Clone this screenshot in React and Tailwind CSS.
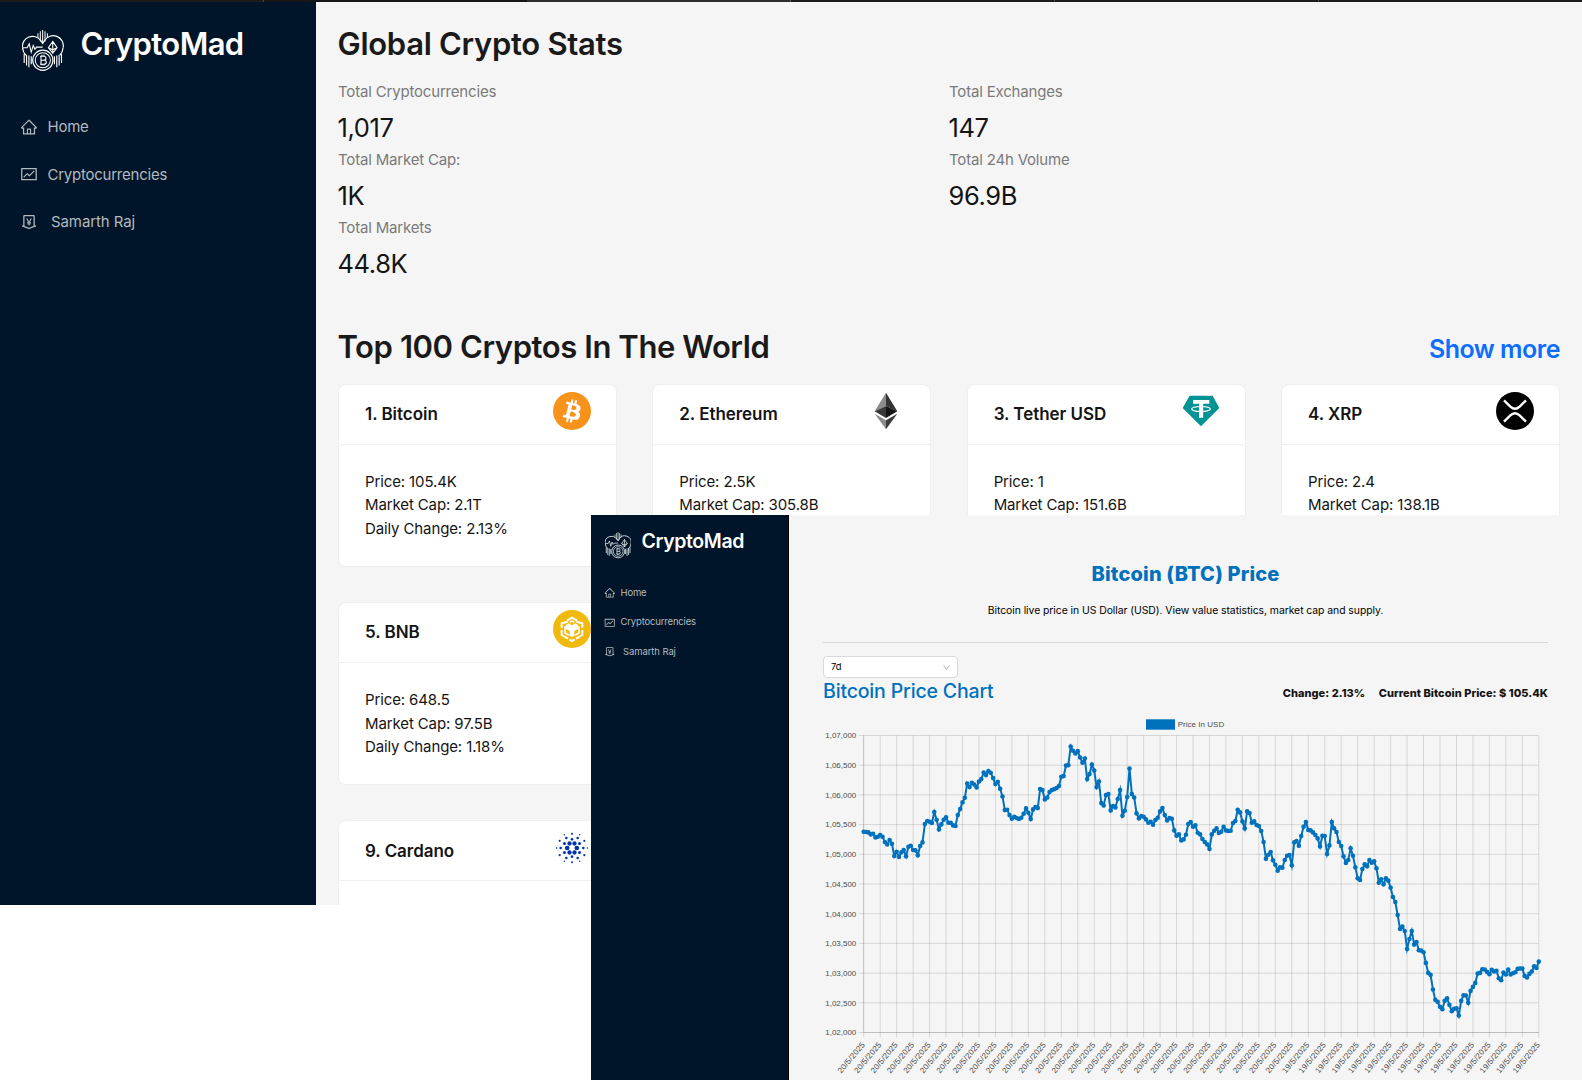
import { AiOutlineHome, AiOutlineFund, AiOutlineMoneyCollect, AiOutlineDown } from "react-icons/ai";

function Logo({ className }) {
  return (
    <svg viewBox="0 0 124 122" className={className} fill="none" stroke="#fff" strokeWidth="3.6">
      <path d="M1 52 A30 30 0 0 1 55 31 L61 40 L67 31 A30 30 0 0 1 122 52" />
      <path d="M1 52 Q2 66 11 75 M122 52 Q121 66 112 75" />
      <path d="M2 53 H15 L21 41 L27 66 L33 46 L38 57 L43 51 H61" strokeWidth="3.2" />
      <path d="M91 34 L104 53 L91 69 L78 53 Z M91 34 V69 M78 53 L91 59 L104 53" strokeWidth="3.2" />
      <path d="M61 0 V40 M54 4 V34 M68 4 V34 M47 10 V24 M75 10 V24" strokeWidth="3" />
      <path d="M6 71 V98 M13 74 V106 M20 76 V111 M27 78 V102 M117 71 V98 M110 74 V106 M103 76 V111 M96 78 V102" strokeWidth="3.4" />
      <circle cx="61.5" cy="90" r="30" fill="#001529" />
      <circle cx="61.5" cy="90" r="22.5" strokeWidth="3" />
      <path d="M53 78 H64 Q71 78 71 84 Q71 90 64 90 H56 M64 90 Q72 90 72 96 Q72 102 64 102 H53 M56 78 V102 M59 74 V78 M65 74 V78 M59 102 V106 M65 102 V106" strokeWidth="3.2" />
    </svg>
  );
}

function Bitcoin() {
  return (
    <svg viewBox="0 0 32 32" className="size-[38px]">
      <circle cx="16" cy="16" r="16" fill="#f7931a" />
      <path
        fill="#fff"
        d="M23.189 14.02c.314-2.096-1.283-3.223-3.465-3.975l.708-2.84-1.728-.43-.69 2.765c-.454-.114-.92-.22-1.385-.326l.695-2.783L15.596 6l-.708 2.839c-.376-.086-.746-.17-1.104-.26l.002-.009-2.384-.595-.46 1.846s1.283.294 1.256.312c.7.175.826.638.805 1.006l-.806 3.235c.048.012.11.03.18.057l-.183-.045-1.13 4.532c-.086.212-.303.531-.793.41.018.025-1.256-.313-1.256-.313l-.858 1.978 2.25.561c.418.105.828.215 1.231.318l-.715 2.872 1.727.43.708-2.84c.472.127.93.245 1.378.357l-.706 2.828 1.728.43.715-2.866c2.948.558 5.164.333 6.097-2.333.752-2.146-.037-3.385-1.588-4.192 1.13-.26 1.98-1.003 2.207-2.538zm-3.95 5.538c-.533 2.147-4.148.986-5.32.695l.95-3.805c1.172.293 4.929.872 4.37 3.11zm.535-5.569c-.487 1.953-3.495.96-4.47.717l.86-3.45c.975.243 4.118.696 3.61 2.733z"
      />
    </svg>
  );
}

function Ethereum() {
  return (
    <svg viewBox="-57 -57 114 114" className="size-[38px]">
      <path d="M0 -55 L-34 1 L0 -15 Z" fill="#8c8c8c" />
      <path d="M0 -55 L34 1 L0 -15 Z" fill="#343434" />
      <path d="M-34 1 L0 -15 V21 Z" fill="#393939" />
      <path d="M34 1 L0 -15 V21 Z" fill="#141414" />
      <path d="M-34 8 L0 28 V55 Z" fill="#8c8c8c" />
      <path d="M34 8 L0 28 V55 Z" fill="#3c3c3b" />
    </svg>
  );
}

function Tether() {
  return (
    <svg viewBox="-57 -57 114 114" className="size-[38px]">
      <path d="M-34 -46 H35 L55 -9 L0 46 L-55 -9 Z" fill="#009393" />
      <path d="M-24 -33 H25 V-22 H6.500 V20 H-6 V-22 H-24 Z" fill="#fff" />
      <ellipse cx="0" cy="-6" rx="28" ry="7.500" fill="none" stroke="#fff" strokeWidth="3.500" />
    </svg>
  );
}

function Xrp() {
  return (
    <svg viewBox="-57 -57 114 114" className="size-[38px]" fill="none" stroke="#fff" strokeWidth="7">
      <circle r="57" fill="#000" stroke="none" />
      <path d="M-33 -32 L-14 -13 Q0 0 14 -13 L33 -32" />
      <path d="M-33 32 L-14 13 Q0 0 14 13 L33 32" />
    </svg>
  );
}

function Bnb() {
  return (
    <svg viewBox="-57 -57 114 114" className="size-[38px]" fill="none" stroke="#fff" strokeWidth="6">
      <circle r="57" fill="#f0b90b" stroke="none" />
      <path d="M-15 -25 L0 -34 L15 -25" />
      <path d="M-13 -22 L-31 -17 V-4 M13 -22 L31 -17 V-4" />
      <path d="M-31 3 V18 L-12 29 M31 3 V18 L12 29" />
      <path d="M-8 31 L0 36 L8 31" />
      <path d="M-21 -8 V12 L-9 19 M21 -8 V12 L9 19" strokeWidth="5" />
      <path d="M-18 -12 L-10 -17 L0 -11 L10 -17 L18 -12 V0 L7 6 V20 L0 24 L-7 20 V6 L-18 0 Z" fill="#fff" stroke="none" />
      <path d="M-7 -20 L0 -24 L7 -20" strokeWidth="4" />
    </svg>
  );
}

const ADA_DOTS = [
  [14.5, 0, 7], [-14.5, 0, 7], [7.500, 13.500, 6.500], [-7.500, 13.500, 6.500], [7.500, -13.500, 6.500], [-7.500, -13.500, 6.500],
  [0, 26, 4], [0, -26, 4], [22.500, 13.500, 4.500], [-22.500, 13.500, 4.500], [22.500, -13.500, 4.500], [-22.500, -13.500, 4.500],
  [34, 0, 3.800], [-34, 0, 3.800], [17, 30, 3.800], [-17, 30, 3.800], [17, -30, 3.800], [-17, -30, 3.800],
  [0, 43, 3], [0, -43, 3], [37, 21.500, 3.200], [-37, 21.500, 3.200], [37, -21.500, 3.200], [-37, -21.500, 3.200],
  [46, 0, 2.200], [-46, 0, 2.200], [23, 40, 2.200], [-23, 40, 2.200], [23, -40, 2.200], [-23, -40, 2.200],
];

function Cardano() {
  return (
    <svg viewBox="-57 -60 114 114" className="size-[38px]" fill="#0033ad">
      {ADA_DOTS.map(([x, y, r]) => (
        <circle key={`${x},${y}`} cx={x} cy={y} r={r} />
      ))}
    </svg>
  );
}

const STATS = [
  ["Total Cryptocurrencies", "1,017"],
  ["Total Exchanges", "147"],
  ["Total Market Cap:", "1K"],
  ["Total 24h Volume", "96.9B"],
  ["Total Markets", "44.8K"],
];

const COINS = [
  { name: "1. Bitcoin", price: "105.4K", cap: "2.1T", change: "2.13%", Icon: Bitcoin },
  { name: "2. Ethereum", price: "2.5K", cap: "305.8B", Icon: Ethereum },
  { name: "3. Tether USD", price: "1", cap: "151.6B", Icon: Tether },
  { name: "4. XRP", price: "2.4", cap: "138.1B", Icon: Xrp },
  { name: "5. BNB", price: "648.5", cap: "97.5B", change: "1.18%", Icon: Bnb },
  null,
  null,
  null,
  { name: "9. Cardano", Icon: Cardano },
];

function CoinCard({ name, price, cap, change, Icon }) {
  return (
    <article className="h-[183px] rounded-lg border border-[#efefef] bg-white">
      <header className="flex h-[60px] items-start justify-between border-b border-[#efefef] pt-[7px] pr-[25px] pl-[26px]">
        <h3 className="pt-[2.500px] text-[17px] leading-[40px] font-semibold tracking-[-0.04px]">{name}</h3>
        <Icon />
      </header>
      {price && (
        <div className="pt-[25px] pl-[26px] text-[15px] leading-[23.7px] tracking-[-0.12px]">
          <p>Price: {price}</p>
          <p>Market Cap: {cap}</p>
          {change && <p>Daily Change: {change}</p>}
        </div>
      )}
    </article>
  );
}

function Dashboard() {
  return (
    <div className="flex h-[903px]">
      <aside className="w-[316px] shrink-0 bg-[#001529]">
        <div className="flex items-start pt-[27px] pl-[22px]">
          <Logo className="mt-[1px] h-[41px] w-[42px]" />
          <span className="-mt-[1px] ml-[16.500px] text-[31px] leading-[32px] font-semibold tracking-[-0.6px] text-white">CryptoMad</span>
        </div>
        <nav className="mt-[33px] text-[15px] tracking-[-0.24px] text-[#b3b9bf]">
          <a className="flex h-[47.3px] items-center gap-[9.5px] pl-[20px]">
            <AiOutlineHome className="-mt-[1px] size-[18px]" />
            Home
          </a>
          <a className="flex h-[47.3px] items-center gap-[9.500px] pl-[20px]">
            <AiOutlineFund className="-mt-[1px] size-[18px]" />
            Cryptocurrencies
          </a>
          <a className="flex h-[47.3px] items-center gap-[13px] pl-[20px] tracking-[-0.1px]">
            <AiOutlineMoneyCollect className="-mt-[1px] size-[18px]" />
            Samarth Raj
          </a>
        </nav>
      </aside>
      <main className="min-w-0 flex-1 overflow-hidden bg-[#f5f5f5] pt-[26px] pr-[22px] pl-[22px]">
        <h1 className="-ml-[0.500px] text-[31px] leading-[32px] font-semibold tracking-[-0.3px] text-[#1a1a1a]">Global Crypto Stats</h1>
        <dl className="mt-[20.4px] grid grid-cols-2">
          {STATS.map(([label, value]) => (
            <div key={label} className="h-[67.8px]">
              <dt className="text-[15px] leading-6 tracking-[-0.18px] text-[#7a7a7a]">{label}</dt>
              <dd className="mt-1 -ml-[0.500px] text-[25.500px] leading-[39.8px] tracking-[-0.4px]">{value}</dd>
            </div>
          ))}
        </dl>
        <div className="mt-[43.600px] flex h-10 items-center justify-between">
          <h2 className="-ml-[0.500px] text-[31px] leading-10 font-semibold tracking-[-0.42px] text-[#1a1a1a]">Top 100 Cryptos In The World</h2>
          <a className="pt-[3px] text-[25px] leading-10 font-semibold tracking-[-0.5px] text-[#0d6efd]">Show more</a>
        </div>
        <div className="mt-[16.2px] grid grid-cols-4 gap-x-[35.300px] gap-y-[35.300px]">
          {COINS.map((coin, i) => (coin ? <CoinCard key={coin.name} {...coin} /> : <div key={i} />))}
        </div>
      </main>
    </div>
  );
}

/* Vertical positions of the series; 76 is 1,07,000 and 968 is 1,02,000. */
const SERIES = [
  365, 366, 367, 373, 371, 382, 380, 375, 380, 396, 403, 390, 401, 438, 425, 441, 427, 420, 439, 410, 407, 420, 421, 436, 408, 397, 342, 333,
  335, 339, 306, 329, 358, 343, 329, 322, 338, 338, 346, 348, 315, 297, 277, 263, 220, 231, 218, 223, 232, 214, 207, 187, 195, 183, 188, 204,
  222, 215, 236, 259, 300, 299, 315, 326, 320, 324, 327, 323, 311, 295, 308, 327, 298, 291, 294, 237, 240, 268, 262, 246, 240, 237, 234, 228,
  200, 198, 166, 165, 109, 122, 130, 123, 142, 158, 145, 207, 192, 163, 181, 231, 214, 279, 286, 255, 252, 301, 288, 292, 267, 240, 317, 302,
  261, 175, 252, 262, 310, 325, 318, 320, 328, 338, 335, 344, 330, 323, 304, 294, 315, 331, 324, 326, 361, 377, 373, 391, 388, 374, 342, 336,
  350, 346, 368, 373, 387, 396, 403, 417, 373, 362, 355, 369, 365, 350, 361, 363, 362, 339, 333, 299, 307, 334, 355, 304, 309, 338, 334, 345,
  348, 363, 396, 446, 434, 426, 451, 464, 482, 472, 473, 450, 437, 435, 466, 397, 393, 407, 378, 350, 336, 360, 361, 367, 375, 385, 409, 377,
  378, 432, 406, 336, 355, 366, 396, 408, 439, 459, 450, 415, 437, 472, 505, 510, 477, 463, 469, 450, 458, 454, 475, 518, 508, 523, 505, 512,
  533, 561, 576, 615, 657, 650, 663, 717, 687, 663, 704, 696, 721, 722, 727, 759, 789, 795, 839, 870, 876, 891, 898, 873, 865, 885, 904, 897,
  895, 917, 873, 856, 857, 879, 843, 831, 819, 791, 789, 778, 779, 786, 793, 780, 785, 783, 805, 811, 788, 794, 779, 794, 790, 787, 777, 776,
  776, 798, 803, 792, 785, 769, 774, 755,
];
const Y_LABELS = ["1,07,000", "1,06,500", "1,06,000", "1,05,500", "1,05,000", "1,04,500", "1,04,000", "1,03,500", "1,03,000", "1,02,500", "1,02,000"];

const LEFT = 40.7;
const RIGHT = 715.8;
const TOP = 21.5;
const BOTTOM = 318.5;
const STEP = (RIGHT - LEFT) / (SERIES.length - 1);
const points = SERIES.map((v, i) => [LEFT + i * STEP, TOP + ((v - 76) / 892) * (BOTTOM - TOP)]);

function PriceChart() {
  return (
    <svg width="759" height="366" viewBox="0 0 759 366" className="block" fontFamily='"Liberation Sans", Arial, sans-serif' fontSize="8" fill="#4d4d4d">
      <rect x="323" y="5.3" width="29" height="10.400" fill="#0071bd" />
      <text x="354.700" y="13.200" textLength="46.500">Price In USD</text>
      <g stroke="#000" strokeOpacity="0.12" fill="none">
        {Y_LABELS.map((label, i) => {
          const y = TOP + (i * (BOTTOM - TOP)) / 10;
          return <path key={label} d={`M${LEFT - 5} ${y}H${RIGHT}`} />;
        })}
        {Array.from({ length: 42 }, (_, i) => {
          const x = LEFT + i * 7 * STEP;
          return <path key={i} d={`M${x} ${TOP}V${BOTTOM + 5}`} />;
        })}
        <path d={`M${LEFT} ${TOP}V${BOTTOM}H${RIGHT}`} />
      </g>
      {Y_LABELS.map((label, i) => (
        <text key={label} x="33.300" y={TOP + (i * (BOTTOM - TOP)) / 10 + 2.8} textAnchor="end" textLength="31">
          {label}
        </text>
      ))}
      {Array.from({ length: 42 }, (_, i) => (
        <text key={i} textAnchor="end" transform={`translate(${LEFT + i * 7 * STEP + 1.6} 331) rotate(-50)`} textLength="37.500">
          {i < 27 ? "20/5/2025" : "19/5/2025"}
        </text>
      ))}
      <polyline points={points.map((p) => p.join(",")).join(" ")} fill="none" stroke="#0071bd" strokeWidth="2" strokeMiterlimit="10" />
      {points.map(([x, y], i) => (
        <circle key={i} cx={x} cy={y} r="2.300" fill="#0071bd" />
      ))}
    </svg>
  );
}

function DetailsWindow() {
  return (
    <section className="absolute top-[515px] left-[591px] flex h-[565px] w-[991px] overflow-hidden bg-[#f5f5f5]">
      <aside className="w-[198px] shrink-0 border-r border-black bg-[#001529]">
        <div className="flex items-start pt-[15px] pl-[13.5px]">
          <Logo className="mt-[2px] size-[26.5px]" />
          <span className="ml-[10.500px] pt-[0.500px] text-[19.500px] leading-[20px] font-semibold tracking-[-0.38px] text-white">CryptoMad</span>
        </div>
        <nav className="mt-[19.500px] text-[9.5px] tracking-[-0.17px] text-[#b3b9bf]">
          <a className="flex h-[29.600px] items-center gap-[5px] pl-[13px]">
            <AiOutlineHome className="size-[11.500px]" />
            Home
          </a>
          <a className="flex h-[29.600px] items-center gap-[5px] pl-[13px]">
            <AiOutlineFund className="size-[11.500px]" />
            Cryptocurrencies
          </a>
          <a className="flex h-[29.600px] items-center gap-[7.500px] pl-[13px] tracking-[-0.1px]">
            <AiOutlineMoneyCollect className="size-[11.500px]" />
            Samarth Raj
          </a>
        </nav>
      </aside>
      <main className="flex min-w-0 flex-1 flex-col pt-[44px] pl-[34px]">
        <header className="flex h-[84px] w-[725px] flex-col items-center border-b border-[#d9d9d9]">
          <h2 className="text-[20px] leading-[30px] font-extrabold tracking-[0.18px] text-[#0071bd]">Bitcoin (BTC) Price</h2>
          <p className="mt-[13.500px] text-[10.4px] leading-[16px] tracking-[-0.05px] text-black">
            Bitcoin live price in US Dollar (USD). View value statistics, market cap and supply.
          </p>
        </header>
        <div className="mt-[13px] flex h-[22px] w-[135px] items-center justify-between rounded border border-[#d9d9d9] bg-white pr-[6px] pl-[7px] text-[9.4px] text-black">
          <span className="pt-[1px]">7d</span>
          <AiOutlineDown className="size-[9px] text-[#a6a6a6]" />
        </div>
        <div className="mt-[0.500px] flex h-[26px] w-[725px] items-center justify-between">
          <h3 className="-mt-[1px] text-[19.500px] leading-[26px] font-medium tracking-[-0.17px] text-[#0071bd]">Bitcoin Price Chart</h3>
          <div className="flex gap-[13.500px] pt-[2.500px] text-[11px] leading-[16px] font-extrabold tracking-[0.05px]">
            <span>Change: 2.13%</span>
            <span>Current Bitcoin Price: $ 105.4K</span>
          </div>
        </div>
        <div className="mt-[9.500px]">
          <PriceChart />
        </div>
      </main>
    </section>
  );
}

export default function App() {
  return (
    <div className="relative h-[1080px] w-[1582px] overflow-hidden bg-white font-['Inter',sans-serif] text-[#141414]">
      <div className="flex h-[2px]">
        <div className="w-[264px] border-r border-[#444] bg-[#1c1c1c]" />
        <div className="w-[263px] bg-[#161616]" />
        <div className="w-[264px] border-r border-[#555] bg-[#302d2d]" />
        <div className="w-[264px] border-r border-[#444] bg-[#1c1c1c]" />
        <div className="w-[264px] border-r border-[#444] bg-[#1c1c1c]" />
        <div className="flex-1 bg-[#1c1c1c]" />
      </div>
      <Dashboard />
      <DetailsWindow />
    </div>
  );
}
